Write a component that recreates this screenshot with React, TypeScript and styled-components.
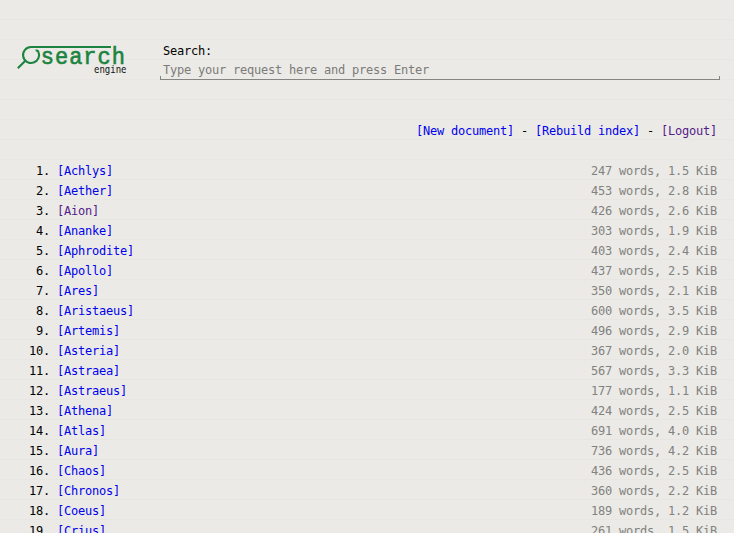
import React from "react";
import styled, { createGlobalStyle } from "styled-components";

const GlobalStyle = createGlobalStyle`
  * { box-sizing: border-box; }
  html, body { margin: 0; }
  body {
    overflow: hidden;
    background: #ebeae6 repeating-linear-gradient(to bottom, transparent 0 19px, #e7e6e2 19px 20px);
    color: #000;
    font: 12px/20px "DejaVu Sans Mono", monospace;
    letter-spacing: -0.2246px;
  }
`;

const Page = styled.div`
  width: 734px;
  height: 533px;
  overflow: hidden;
`;

const Header = styled.header`
  display: flex;
  height: 120px;
  padding: 40px 14px 0 16px;
`;

const Logo = styled.svg`
  flex: none;
  width: 144px;
  height: 40px;
  letter-spacing: 0;
`;

const LogoWord = styled.text`
  font: 22px "Liberation Mono", monospace;
  letter-spacing: 1px;
  fill: #1c8440;
  stroke: #1c8440;
  stroke-width: 0.6px;
`;

const LogoCaption = styled.text`
  font: 9px "DejaVu Sans Mono", monospace;
  fill: #111;
`;

const SearchForm = styled.form`
  flex: 1;
  height: 40px;
`;

const SearchLabel = styled.label`
  display: block;
  height: 20px;
  padding: 1px 3px 0;
`;

const SearchField = styled.div`
  display: flex;
  height: 20px;
  background:
    linear-gradient(#858581, #858581) left bottom / 1px 4px no-repeat,
    linear-gradient(#858581, #858581) right bottom / 1px 4px no-repeat,
    linear-gradient(#858581, #858581) left bottom / 100% 1px no-repeat;
`;

const SearchInput = styled.input`
  flex: 1;
  height: 20px;
  padding: 0 3px;
  border: 0;
  outline: 0;
  background: transparent;
  font: inherit;
  letter-spacing: inherit;
  &::placeholder { color: #7b7b79; opacity: 1; }
`;

const Actions = styled.nav`
  height: 40px;
  padding: 1px 17px 0 0;
  text-align: right;
  white-space: pre;
`;

const Link = styled.a<{ $visited?: boolean }>`
  color: ${(p) => (p.$visited ? "#551a8b" : "#0000ee")};
  text-decoration: none;
`;

const DocumentList = styled.ol`
  margin: 0;
  padding: 0;
  list-style: none;
`;

const DocumentRow = styled.li`
  display: grid;
  grid-template-columns: 50px 1fr auto;
  height: 20px;
  padding: 1px 17px 0 0;
`;

const Index = styled.span`
  text-align: right;
`;

const Title = styled.span`
  padding-left: 7px;
`;

const Meta = styled.span`
  color: #82827f;
`;

const documents: [string, number, string][] = [
  ["Achlys", 247, "1.5"],
  ["Aether", 453, "2.8"],
  ["Aion", 426, "2.6"],
  ["Ananke", 303, "1.9"],
  ["Aphrodite", 403, "2.4"],
  ["Apollo", 437, "2.5"],
  ["Ares", 350, "2.1"],
  ["Aristaeus", 600, "3.5"],
  ["Artemis", 496, "2.9"],
  ["Asteria", 367, "2.0"],
  ["Astraea", 567, "3.3"],
  ["Astraeus", 177, "1.1"],
  ["Athena", 424, "2.5"],
  ["Atlas", 691, "4.0"],
  ["Aura", 736, "4.2"],
  ["Chaos", 436, "2.5"],
  ["Chronos", 360, "2.2"],
  ["Coeus", 189, "1.2"],
  ["Crius", 261, "1.5"],
];

export default function App() {
  return (
    <Page>
      <GlobalStyle />
      <Header>
        <Logo viewBox="16 40 144 40" role="img" aria-label="search engine">
          <g fill="none" stroke="#1c8440" strokeWidth="2.1">
            <path d="M111 47H31A8 8 0 1 0 38.2 51.4Q37.4 50.2 35.6 50.6" />
            <path d="M25.3 60.7L17.8 68.2" />
          </g>
          <LogoWord transform="translate(40.8 64) scale(1 1.08)">search</LogoWord>
          <LogoCaption transform="translate(94 73) scale(1 1.1)">engine</LogoCaption>
        </Logo>
        <SearchForm onSubmit={(e) => e.preventDefault()}>
          <SearchLabel htmlFor="query">Search:</SearchLabel>
          <SearchField>
            <SearchInput id="query" placeholder="Type your request here and press Enter" />
          </SearchField>
        </SearchForm>
      </Header>
      <Actions>
        <Link href="#new">[New document]</Link>{" - "}
        <Link href="#rebuild">[Rebuild index]</Link>{" - "}
        <Link href="#logout" $visited>[Logout]</Link>
      </Actions>
      <DocumentList>
        {documents.map(([name, words, size], i) => (
          <DocumentRow key={name}>
            <Index>{i + 1}.</Index>
            <Title><Link href={`#${name}`} $visited={name === "Aion"}>[{name}]</Link></Title>
            <Meta>{words} words, {size} KiB</Meta>
          </DocumentRow>
        ))}
      </DocumentList>
    </Page>
  );
}
